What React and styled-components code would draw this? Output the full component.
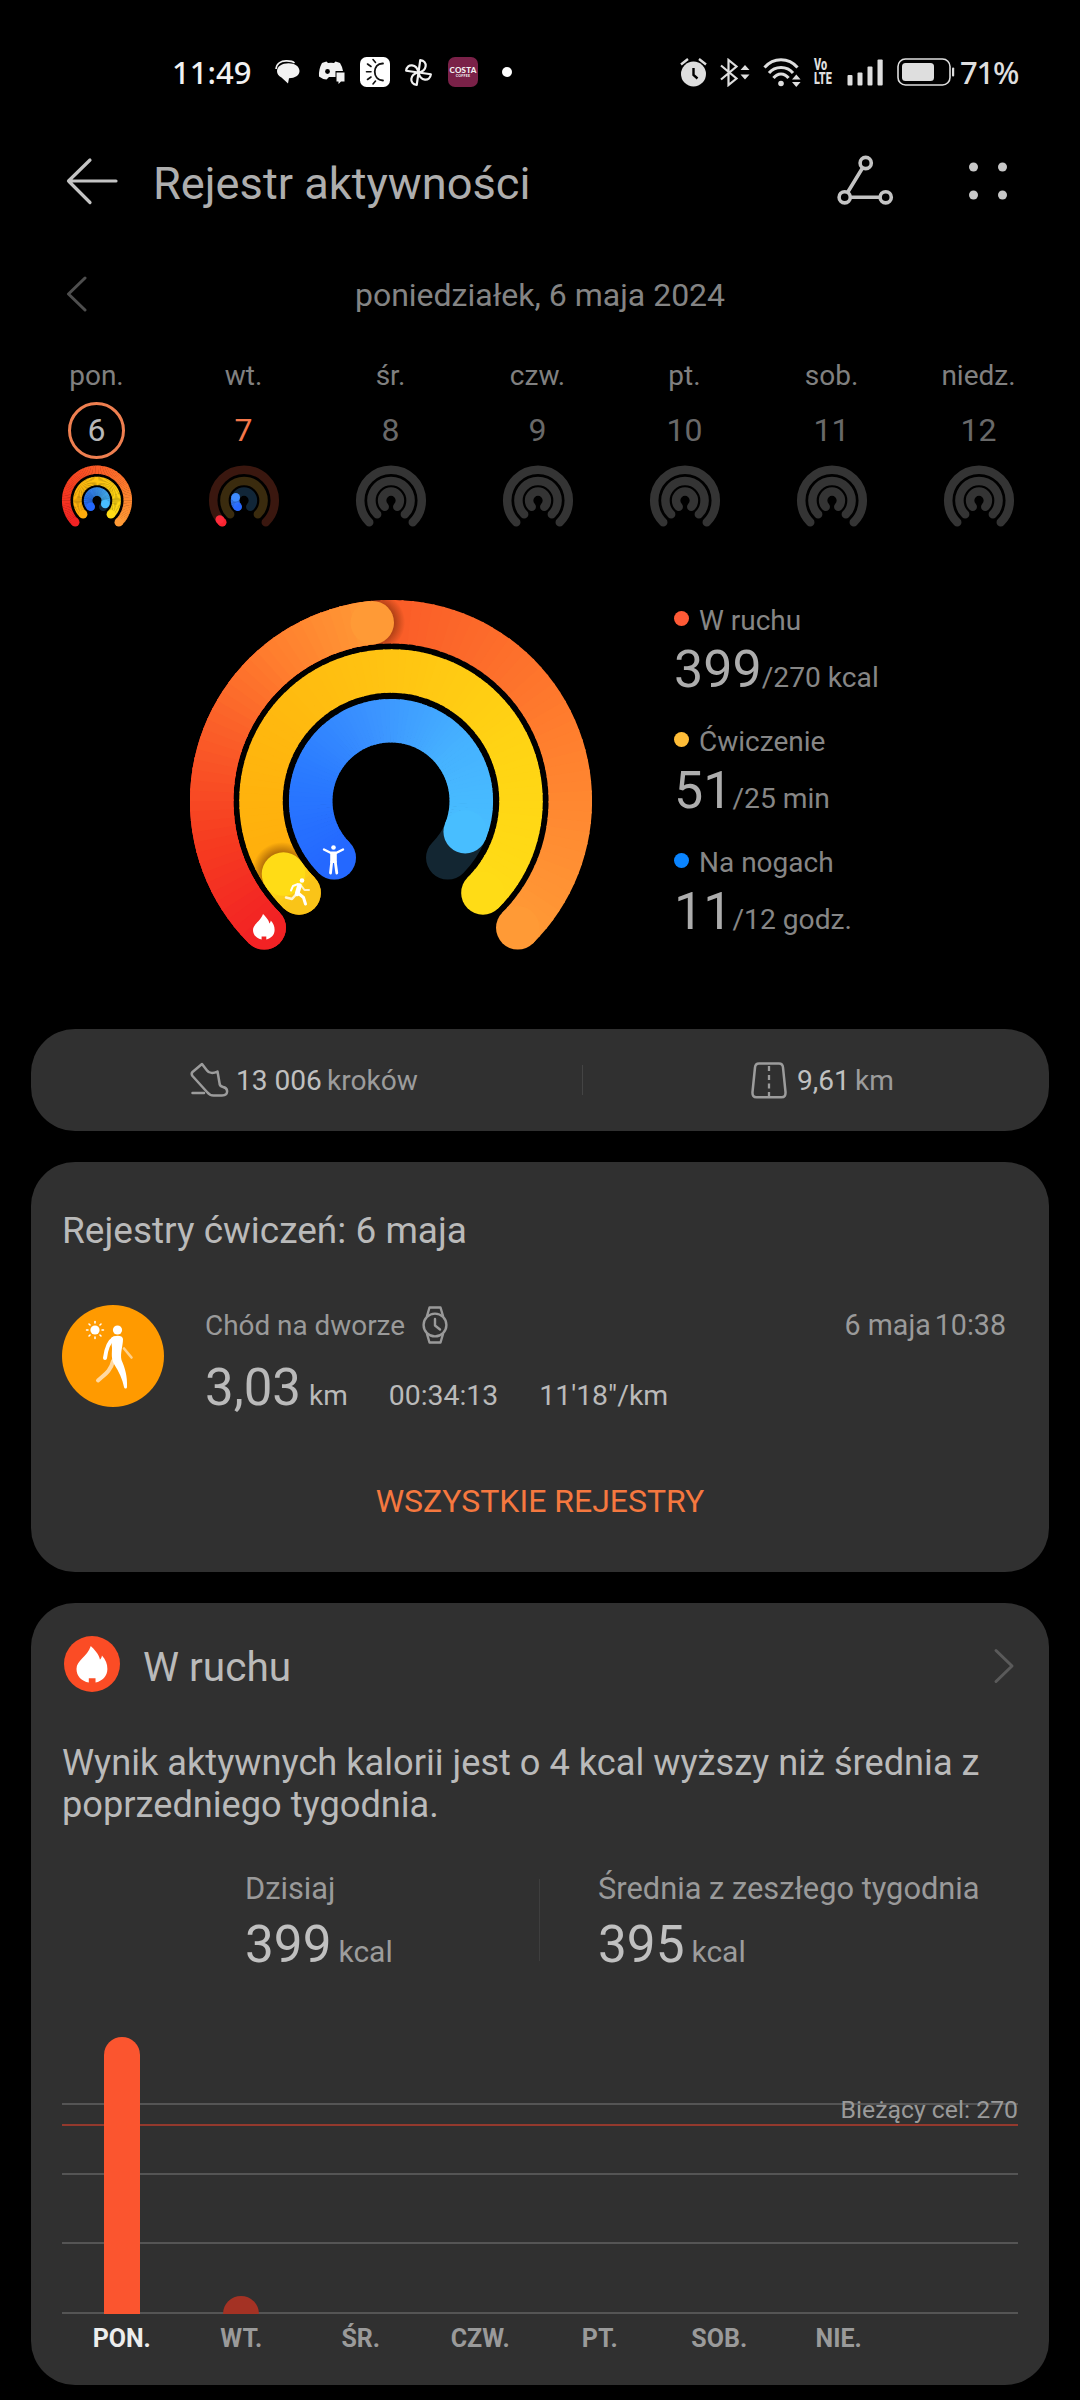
import styled, { createGlobalStyle } from 'styled-components'

const GlobalStyle = createGlobalStyle`
  * {
    box-sizing: border-box;
  }
  body {
    margin: 0;
    background: #000;
    font-family: Roboto, sans-serif;
  }
`

const days = [
  { name: 'pon.', date: 6, state: 'selected' },
  { name: 'wt.', date: 7, state: 'today' },
  { name: 'śr.', date: 8 },
  { name: 'czw.', date: 9 },
  { name: 'pt.', date: 10 },
  { name: 'sob.', date: 11 },
  { name: 'niedz.', date: 12 },
]

const goals = [
  { label: 'W ruchu', value: '399', target: '/270 kcal', color: '#ff5a36' },
  { label: 'Ćwiczenie', value: '51', target: '/25 min', color: '#ffbd38' },
  { label: 'Na nogach', value: '11', target: '/12 godz.', color: '#0a84ff' },
]

const bars = [
  { label: 'PON.', height: 277, color: '#fb552f', active: true },
  { label: 'WT.', height: 18, color: '#a43224' },
  { label: 'ŚR.' },
  { label: 'CZW.' },
  { label: 'PT.' },
  { label: 'SOB.' },
  { label: 'NIE.' },
]

const RED = [[242, 34, 36], [246, 60, 32], [250, 92, 40], [255, 126, 46], [255, 154, 54]]
const YELLOW = [[255, 172, 12], [255, 182, 14], [255, 196, 18], [255, 212, 20], [255, 220, 22]]
const YELLOW_LAP = [[250, 196, 24], [255, 220, 22]]
const BLUE = [[36, 104, 255], [42, 122, 255], [60, 148, 255], [70, 178, 255], [72, 190, 255]]

function mix(stops, t) {
  const pos = Math.min(Math.max(t, 0), 1) * (stops.length - 1)
  const i = Math.min(Math.floor(pos), stops.length - 2)
  const f = pos - i
  return `rgb(${stops[i].map((c, k) => Math.round(c + (stops[i + 1][k] - c) * f)).join(',')})`
}

// the gauges open at the bottom, so 0deg is the lower left end
function point(r, deg) {
  const a = ((135 + deg) * Math.PI) / 180
  return [r * Math.cos(a), r * Math.sin(a)]
}

function arcPath(r, from, to) {
  const [x1, y1] = point(r, from)
  const [x2, y2] = point(r, to)
  return `M${x1} ${y1}A${r} ${r} 0 ${to - from > 180 ? 1 : 0} 1 ${x2} ${y2}`
}

function Arc({ r, width, sweep, stops }) {
  const count = Math.max(2, Math.round(sweep / 3))
  const step = sweep / count
  const [sx, sy] = point(r, 0)
  const [ex, ey] = point(r, sweep)
  return (
    <g fill="none" strokeWidth={width}>
      <circle cx={sx} cy={sy} r={width / 2} fill={mix(stops, 0)} />
      {Array.from({ length: count }, (_, i) => (
        <path
          key={i}
          d={arcPath(r, i * step, Math.min((i + 1) * step + 0.6, sweep))}
          stroke={mix(stops, (i + 0.5) / count)}
        />
      ))}
      <circle cx={ex} cy={ey} r={width / 2} fill={mix(stops, 1)} />
    </g>
  )
}

function Track({ r, width, color }) {
  return <path d={arcPath(r, 0, 270)} fill="none" stroke={color} strokeWidth={width} strokeLinecap="round" />
}

function LapShadow({ id, r, width, deg }) {
  const [x, y] = point(r, deg)
  const o = r + width / 2
  const n = r - width / 2
  return (
    <g>
      <radialGradient id={`${id}-fade`}>
        <stop offset="0.6" stopColor="#5a2000" stopOpacity="0.5" />
        <stop offset="1" stopColor="#5a2000" stopOpacity="0" />
      </radialGradient>
      <clipPath id={id}>
        <path
          clipRule="evenodd"
          d={`M${-o} 0A${o} ${o} 0 1 1 ${o} 0A${o} ${o} 0 1 1 ${-o} 0ZM${-n} 0A${n} ${n} 0 1 1 ${n} 0A${n} ${n} 0 1 1 ${-n} 0Z`}
        />
      </clipPath>
      <g clipPath={`url(#${id})`}>
        <circle cx={x} cy={y} r={width / 2 + 8} fill={`url(#${id}-fade)`} />
      </g>
    </g>
  )
}

const FLAME =
  'M10 0C12 2 16 6 16.400 9.500C17 9 17.600 8 17.800 6.600C20.500 9.500 21.600 12.500 21.600 16C21.600 21 18 24.500 13.300 25.500V22.500H8.600V25.500C3.500 24.500 0 21 0 16C0 10 7.500 7.500 10 0Z'

function ActivityRings() {
  const w = 43.5
  return (
    <svg width="402" height="350" viewBox="-201 -201 402 350">
      <Arc r={179.3} width={w} sweep={270} stops={RED} />
      <LapShadow id="move" r={179.3} width={w} deg={130} />
      <Arc r={179.3} width={w} sweep={129} stops={RED} />
      <Arc r={130} width={w} sweep={270} stops={YELLOW} />
      <LapShadow id="exercise" r={130} width={w} deg={12} />
      <Arc r={130} width={w} sweep={10.8} stops={YELLOW_LAP} />
      <Track r={80.3} width={w} color="#132632" />
      <Arc r={80.3} width={w} sweep={247.5} stops={BLUE} />
      <path d={FLAME} fill="#fff" transform="translate(-138 113)" />
      <g transform="translate(-57.500 44)" stroke="#fff" fill="none" strokeLinecap="round" strokeLinejoin="round">
        <circle cx="0" cy="2.500" r="2.300" fill="#fff" stroke="none" />
        <path d="M-9.500 4.500L-3 7.800H3L9.500 4.500" strokeWidth="2.400" />
        <path d="M-2.300 8H2.300V17H-2.300Z" fill="#fff" strokeWidth="2" />
        <path d="M-1.800 17L-3 28M1.800 17L3.300 28" strokeWidth="2.800" />
      </g>
      <g transform="translate(-93 91)" stroke="#fff" fill="none" strokeLinecap="round" strokeLinejoin="round">
        <circle cx="4" cy="-11.500" r="2.300" fill="#fff" stroke="none" />
        <path d="M1.500 -6.500L-1 2" strokeWidth="4.600" />
        <path d="M0 -8L-5 -6L-7 -1.500" strokeWidth="2" />
        <path d="M3.500 -6L6.500 -2H11" strokeWidth="2" opacity="0.750" />
        <path d="M0 1L5.500 5.500L7.500 12" strokeWidth="3" />
        <path d="M-2 2.500L-6 7L-12 5.500" strokeWidth="2.500" opacity="0.800" />
      </g>
    </svg>
  )
}

function DayRings({ state }) {
  const w = 8.5
  const idle = state ? null : '#343434'
  return (
    <svg width="72" height="62" viewBox="-36 -35.500 72 62">
      {state !== 'selected' && (
        <>
          <Track r={30.8} width={w} color={idle || '#3a170f'} />
          <Track r={19.6} width={w} color={idle || '#3a2b0e'} />
          <Track r={8.9} width={w} color={idle || '#112638'} />
        </>
      )}
      {state === 'selected' && (
        <>
          <Arc r={30.8} width={w} sweep={270} stops={RED} />
          <Arc r={19.6} width={w} sweep={270} stops={YELLOW} />
          <Track r={8.9} width={w} color="#112638" />
          <Arc r={8.9} width={w} sweep={247.5} stops={BLUE} />
        </>
      )}
      {state === 'today' && (
        <>
          <Arc r={30.8} width={w} sweep={7} stops={[[250, 36, 48], [255, 44, 60]]} />
          <Arc r={8.9} width={w} sweep={67} stops={[[40, 104, 255], [62, 140, 255]]} />
        </>
      )}
    </svg>
  )
}

function ChatIcon() {
  return (
    <svg width="25" height="24" viewBox="0 0 25 24" fill="#f2f2f2">
      <path d="M1 9C1.500 3.500 6 1 11 0.900C15 0.800 18 1.500 19.500 3" fill="none" stroke="#f2f2f2" strokeWidth="1.600" />
      <path d="M13.500 3.200C20 3.200 24.500 6.500 24.500 11C24.500 15.500 20 18 14 18.300L13 23.500L6.500 17.500C3.500 16 2 14 2 11C2 6.500 7 3.200 13.500 3.200Z" />
    </svg>
  )
}

function DiscordIcon() {
  return (
    <svg width="27" height="24" viewBox="0 0 27 24">
      <path
        fill="#f2f2f2"
        d="M8.500 1.500L10 3Q13 2.500 16 3L17.500 1.500Q20 2 22 3Q24.500 7 25 11H17.500V17H11L8.500 19.500Q4 19 1 16.500Q0.500 9 4 3Q6 2 8.500 1.500Z"
      />
      <circle cx="9.500" cy="11.500" r="2.400" fill="#000" />
      <path fill="#f2f2f2" d="M18.500 12.500H26.500V21.500H23L20.500 24V21.500H18.500Z" />
    </svg>
  )
}

function SunAppIcon() {
  return (
    <svg width="30" height="30" viewBox="0 0 30 30" fill="none" stroke="#111" strokeWidth="1.600" strokeLinecap="round">
      <rect width="30" height="30" rx="6.500" fill="#fff" stroke="none" />
      <path d="M23 6.500C12 6 12 23.500 23 23.500" strokeWidth="1.800" />
      <path d="M13 2.500L15.500 5.500M7.500 7L11 9.500M6.500 14.800H11M7.500 22.500L11 20M13 27L15.500 24" />
    </svg>
  )
}

function PinwheelIcon() {
  return (
    <svg width="29" height="29" viewBox="-14.500 -14.500 29 29" fill="none" stroke="#f2f2f2" strokeWidth="2.200" strokeLinejoin="round">
      {[8, 98, 188, 278].map((deg) => (
        <path key={deg} d="M0 0V-12.500C8 -12.500 8.500 -3 0 0Z" transform={`rotate(${deg})`} />
      ))}
    </svg>
  )
}

function AlarmIcon() {
  return (
    <svg width="27" height="29" viewBox="0 0 27 29" stroke="#dedede" strokeWidth="2.400" fill="none">
      <circle cx="13.500" cy="16" r="12.500" fill="#dedede" stroke="none" />
      <path d="M1 6.500L8 1M26 6.500L19 1" />
      <path d="M13.500 10V17L17.500 20.500" stroke="#000" />
    </svg>
  )
}

function BluetoothIcon() {
  return (
    <svg width="30" height="29" viewBox="0 0 30 29" stroke="#dedede" strokeWidth="2.200" fill="none">
      <path d="M1 7.500L16.500 20.500L8.500 27V2L16.500 8.500L1 21.500" />
      <path d="M20.500 12L25 7L29.500 12ZM20.500 16.500L25 21.500L29.500 16.500Z" fill="#dedede" stroke="none" />
    </svg>
  )
}

function WifiIcon() {
  return (
    <svg width="38" height="29" viewBox="0 0 38 29" stroke="#dedede" strokeWidth="3" fill="none">
      <path d="M1.500 9.500C10.500 -0.800 25.500 -0.800 34.500 9.500" />
      <path d="M6 15C12 7.500 24 7.500 30 15" />
      <path d="M10.500 20C14.500 14.500 21.500 14.500 25.500 20" />
      <circle cx="18" cy="25.500" r="2.800" fill="#dedede" stroke="none" />
      <path d="M29 21.500L33.300 16.500L37.600 21.500ZM29 24L33.300 29L37.600 24Z" fill="#dedede" stroke="none" />
    </svg>
  )
}

function SignalIcon() {
  return (
    <svg width="37" height="27" viewBox="0 0 37 27" fill="#dedede">
      <rect x="0.500" y="16" width="5" height="10.500" rx="1" />
      <rect x="10.500" y="13.500" width="5" height="13" rx="1" />
      <rect x="20.500" y="7.500" width="5" height="19" rx="1" />
      <rect x="30.500" y="0.500" width="5.200" height="26" rx="1" />
    </svg>
  )
}

function BatteryIcon() {
  return (
    <svg width="58" height="28" viewBox="0 0 58 28">
      <rect x="1" y="1" width="52" height="26" rx="7.500" fill="none" stroke="#dedede" strokeWidth="1.600" />
      <rect x="5" y="5" width="32" height="18" rx="3.500" fill="#dedede" />
      <rect x="55" y="9.500" width="2.200" height="9" rx="1" fill="#dedede" />
    </svg>
  )
}

function BackIcon() {
  return (
    <svg width="54" height="48" viewBox="0 0 54 48" fill="none" stroke="#c4c4c4" strokeWidth="3.200" strokeLinecap="round" strokeLinejoin="round">
      <path d="M25 3L3.500 24L25 45.500M3.500 24H51" />
    </svg>
  )
}

function RouteIcon() {
  return (
    <svg width="58" height="52" viewBox="0 0 58 52" fill="none" stroke="#c4c4c4" strokeWidth="3.600">
      <circle cx="28.700" cy="8" r="5.600" />
      <circle cx="7.700" cy="42.300" r="5.600" />
      <circle cx="48.700" cy="42.300" r="5.600" />
      <path d="M25.500 13L10.700 37.300M13.500 42.300H43" />
    </svg>
  )
}

function MenuIcon() {
  return (
    <svg width="38" height="38" viewBox="0 0 38 38" fill="#c8c8c8">
      <circle cx="4.500" cy="5" r="4.500" />
      <circle cx="33.500" cy="5" r="4.500" />
      <circle cx="4.500" cy="33" r="4.500" />
      <circle cx="33.500" cy="33" r="4.500" />
    </svg>
  )
}

function Chevron({ right }) {
  return (
    <svg
      width="22"
      height="36"
      viewBox="0 0 22 36"
      fill="none"
      stroke={right ? '#5a5a5a' : '#4e4e4e'}
      strokeWidth="3"
      strokeLinecap="round"
      strokeLinejoin="round"
    >
      <path d={right ? 'M3 2.500L19 18L3 33.500' : 'M19 2L2.500 18L19 34'} />
    </svg>
  )
}

function ShoeIcon() {
  return (
    <svg width="39" height="36" viewBox="0 0 39 36" fill="none" stroke="#9c9c9c" strokeWidth="2.500" strokeLinejoin="round" strokeLinecap="round">
      <path d="M12 2L2.500 10C1.500 11 1.500 12.500 2.500 14L17 30C19 32.500 21 33.500 23.500 33.500H32C36 33.500 37.500 31.500 37 28.500C36.700 26.500 35.500 25.500 33 25C30.500 24.500 29.500 23.500 29.500 21L27.500 9.500C23.500 11.500 19 11.500 17 8.500Z" />
      <path d="M2.500 31H14" />
    </svg>
  )
}

function RoadIcon() {
  return (
    <svg width="36" height="37" viewBox="0 0 36 37" fill="none" stroke="#9c9c9c" strokeWidth="2.500" strokeLinejoin="round">
      <path d="M8 1.500H28C30.500 1.500 31.800 3 32 5.500L34.500 30C34.700 33.500 33.500 35.300 30.500 35.300H5.500C2.500 35.300 1.300 33.500 1.500 30L4 5.500C4.200 3 5.500 1.500 8 1.500Z" />
      <path d="M18 4V9M18 13V18M18 21.500V26.500M18 30V34" strokeWidth="2.300" />
    </svg>
  )
}

function WatchIcon() {
  return (
    <svg width="26" height="38" viewBox="0 0 26 38" fill="none" stroke="#9a9a9a" strokeWidth="2.400" strokeLinejoin="round" strokeLinecap="round">
      <circle cx="13" cy="19" r="11.400" />
      <path d="M5 10L7.500 1.500H18.500L21 10M5 28L7.500 36.500H18.500L21 28M13 13V19.500L18 23.500" />
    </svg>
  )
}

function WalkIcon() {
  return (
    <svg width="102" height="102" viewBox="0 0 102 102" fill="none" strokeLinecap="round" strokeLinejoin="round">
      <circle cx="51" cy="51" r="51" fill="#ff9a00" />
      <circle cx="33" cy="25" r="4.600" fill="#fff" />
      {[0, 45, 90, 135, 180, 225, 270, 315].map((deg) => (
        <path key={deg} d="M33 18V16.500" stroke="#fff" strokeWidth="1.500" transform={`rotate(${deg} 33 25)`} />
      ))}
      <circle cx="55.500" cy="25" r="4.600" fill="#fff" />
      <path d="M62 43.500L69.500 52.500" stroke="#ffd08a" strokeWidth="2.600" />
      <path d="M51 56C49 66 42 70 36 75.500" stroke="#ffd9a3" strokeWidth="4" />
      <path d="M49 33C53 29.500 61 30 61 34C61 41 58 48 59.500 55C63 63 65.500 71 65 82C64.800 84 62.500 84 62 82C60.500 74 57 67 52 59C49 54 50 48 50 43Z" fill="#fff" />
      <path d="M52 33.500C46 37 44 45 43 53" stroke="#fff" strokeWidth="4" />
    </svg>
  )
}

function FlameBadge() {
  return (
    <svg width="56" height="56" viewBox="0 0 56 56">
      <circle cx="28" cy="28" r="28" fill="#fb4c25" />
      <path d={FLAME} fill="#fff" transform="translate(12.500 10) scale(1.430)" />
    </svg>
  )
}

export default function App() {
  return (
    <Screen>
      <GlobalStyle />
      <StatusBar>
        <Clock>11:49</Clock>
        <StatusIcons>
          <ChatIcon />
          <StatusSlot $left={18}><DiscordIcon /></StatusSlot>
          <StatusSlot $left={15}><SunAppIcon /></StatusSlot>
          <StatusSlot $left={14}><PinwheelIcon /></StatusSlot>
          <CostaBadge>
            COSTA
            <small>COFFEE</small>
          </CostaBadge>
          <MoreDot />
        </StatusIcons>
        <StatusIcons $end>
          <AlarmIcon />
          <BluetoothIcon />
          <WifiIcon />
          <VoLte>Vo<br />LTE</VoLte>
          <SignalIcon />
          <BatteryIcon />
        </StatusIcons>
        <BatteryLevel>71%</BatteryLevel>
      </StatusBar>

      <Header>
        <BackIcon />
        <Title>Rejestr aktywności</Title>
        <HeaderActions>
          <RouteIcon />
          <MenuIcon />
        </HeaderActions>
      </Header>

      <DateRow>
        <Chevron />
        <span>poniedziałek, 6 maja 2024</span>
      </DateRow>

      <Week>
        {days.map((day) => (
          <Day key={day.name}>
            <DayName>{day.name}</DayName>
            <DayDate $state={day.state}>{day.date}</DayDate>
            <DayRings state={day.state} />
          </Day>
        ))}
      </Week>

      <Summary>
        <ActivityRings />
        <Legend>
          {goals.map((goal) => (
            <div key={goal.label}>
              <GoalLabel $color={goal.color}>{goal.label}</GoalLabel>
              <GoalValue>
                {goal.value}
                <span>{goal.target}</span>
              </GoalValue>
            </div>
          ))}
        </Legend>
      </Summary>

      <StepsCard>
        <Steps>
          <ShoeIcon />
          <Metric><b>13 006</b>kroków</Metric>
        </Steps>
        <Distance>
          <RoadIcon />
          <Metric><b>9,61</b>km</Metric>
        </Distance>
      </StepsCard>

      <RecordsCard>
        <CardTitle>Rejestry ćwiczeń: 6 maja</CardTitle>
        <Workout>
          <WalkIcon />
          <WorkoutBody>
            <WorkoutHead>
              <span>Chód na dworze</span>
              <WatchIcon />
              <WorkoutDate>
                <span>6 maja</span>
                <span>10:38</span>
              </WorkoutDate>
            </WorkoutHead>
            <WorkoutStats>
              <WorkoutDistance>3,03<span>km</span></WorkoutDistance>
              <span>00:34:13</span>
              <span>11'18"/km</span>
            </WorkoutStats>
          </WorkoutBody>
        </Workout>
        <AllRecords>WSZYSTKIE REJESTRY</AllRecords>
      </RecordsCard>

      <MoveCard>
        <MoveHead>
          <FlameBadge />
          <h2>W ruchu</h2>
          <Chevron right />
        </MoveHead>
        <Insight>Wynik aktywnych kalorii jest o 4 kcal wyższy niż średnia z poprzedniego tygodnia.</Insight>
        <Compare>
          <CompareItem>
            <p>Dzisiaj</p>
            <CompareValue>399<span>kcal</span></CompareValue>
          </CompareItem>
          <CompareItem $divided>
            <p>Średnia z zeszłego tygodnia</p>
            <CompareValue>395<span>kcal</span></CompareValue>
          </CompareItem>
        </Compare>
        <Chart>
          <GridLines>
            <i />
            <i />
            <i />
            <i />
          </GridLines>
          <GoalLine>
            <span>Bieżący cel: 270</span>
          </GoalLine>
          <Bars>
            {bars.map((bar) => (
              <Bar key={bar.label} style={{ height: bar.height || 0, background: bar.color }} />
            ))}
          </Bars>
        </Chart>
        <BarLabels>
          {bars.map((bar) => (
            <BarLabel key={bar.label} $active={bar.active}>{bar.label}</BarLabel>
          ))}
        </BarLabels>
      </MoveCard>
    </Screen>
  )
}

const Screen = styled.div`
  width: 1080px;
  height: 2400px;
  overflow: hidden;
  background: #000;
  color: #bababa;
  svg {
    display: block;
    flex: none;
  }
`

const StatusBar = styled.div`
  display: flex;
  align-items: center;
  height: 104px;
  padding: 40px 61px 0 172px;
  color: #f2f2f2;
  font-family: 'Noto Sans', sans-serif;
  font-weight: 500;
`

const Clock = styled.div`
  width: 103px;
  font-size: 31px;
  line-height: 40px;
`

const StatusIcons = styled.div`
  display: flex;
  align-items: center;
  gap: ${(p) => (p.$end ? 13 : 0)}px;
  margin-left: ${(p) => (p.$end ? 'auto' : 0)};
`

const StatusSlot = styled.div`
  margin-left: ${(p) => p.$left}px;
`

const CostaBadge = styled.div`
  display: flex;
  flex-direction: column;
  justify-content: center;
  width: 30px;
  height: 30px;
  margin-left: 15px;
  border-radius: 7px;
  background: #7a2148;
  text-align: center;
  font: 900 8px/8px Lato, sans-serif;
  letter-spacing: 0.2px;
  small {
    font-size: 3.5px;
    line-height: 4px;
  }
`

const MoreDot = styled.div`
  width: 10px;
  height: 10px;
  margin-left: 24px;
  border-radius: 50%;
  background: #fff;
`

const VoLte = styled.div`
  width: 20px;
  height: 28px;
  color: #dedede;
  font: 900 16px/14px Roboto, sans-serif;
  transform: scaleX(0.68);
  transform-origin: left;
`

const BatteryLevel = styled.div`
  width: 59px;
  margin-left: 5px;
  color: #dedede;
  font-size: 31px;
  line-height: 40px;
  letter-spacing: -1.2px;
`

const Header = styled.header`
  display: flex;
  align-items: center;
  height: 158px;
  padding: 0 73px 0 65px;
  svg {
    margin-bottom: 4px;
  }
`

const Title = styled.h1`
  margin: 2px 0 0 34px;
  color: #aeaeae;
  font-size: 45.2px;
  font-weight: 400;
  line-height: 60px;
`

const HeaderActions = styled.div`
  display: flex;
  align-items: center;
  gap: 74px;
  margin-left: auto;
`

const DateRow = styled.div`
  display: grid;
  grid-template-columns: 22px 1fr 22px;
  align-items: center;
  height: 64px;
  padding: 0 66px;
  color: #848484;
  font-size: 32px;
  text-align: center;
  span {
    padding-top: 1px;
  }
`

const Week = styled.div`
  display: grid;
  grid-template-columns: repeat(7, 147px);
  justify-content: center;
  margin-top: 30px;
  padding-right: 5px;
`

const Day = styled.div`
  display: flex;
  flex-direction: column;
  align-items: center;
`

const DayName = styled.div`
  color: #808080;
  font-size: 28px;
  line-height: 40px;
`

const DayDate = styled.div`
  width: 57px;
  height: 57px;
  margin: 6px 0 6px;
  border: 3px solid ${(p) => (p.$state === 'selected' ? '#ef7f50' : 'transparent')};
  border-radius: 50%;
  color: ${(p) => ({ selected: '#b8b8b8', today: '#f4774a' })[p.$state] || '#696969'};
  font-size: 32px;
  line-height: 51px;
  text-align: center;
`

const Summary = styled.section`
  display: flex;
  gap: 82px;
  height: 502px;
  padding: 73px 0 0 190px;
`

const Legend = styled.div`
  display: flex;
  flex-direction: column;
  gap: 24px;
  padding-top: 3px;
`

const GoalLabel = styled.div`
  display: flex;
  align-items: center;
  gap: 10px;
  margin-bottom: 1px;
  color: #868686;
  font-size: 28px;
  line-height: 36px;
  &::before {
    content: '';
    width: 15px;
    height: 15px;
    margin-bottom: 5px;
    border-radius: 50%;
    background: ${(p) => p.$color};
  }
`

const GoalValue = styled.div`
  height: 60px;
  color: #adadad;
  font-size: 52px;
  line-height: 60px;
  white-space: nowrap;
  span {
    color: #868686;
    font-size: 28.2px;
  }
`

const Card = styled.section`
  width: 1018px;
  margin: 0 31px 31px;
  border-radius: 44px;
  background: #303030;
`

const StepsCard = styled(Card)`
  display: grid;
  grid-template-columns: 552px 1fr;
  align-items: center;
  height: 102px;
`

const Steps = styled.div`
  display: flex;
  align-items: center;
  gap: 7px;
  height: 30px;
  padding-left: 159px;
  border-right: 1px solid #444;
`

const Distance = styled.div`
  display: flex;
  align-items: center;
  gap: 10px;
  padding-left: 168px;
`

const Metric = styled.span`
  display: flex;
  gap: 5px;
  padding-top: 1px;
  color: #9c9c9c;
  font-size: 28.1px;
  b {
    color: #c0c0c0;
    font-weight: 400;
  }
`

const RecordsCard = styled(Card)`
  height: 410px;
  padding: 45px 31px 0;
`

const CardTitle = styled.h2`
  margin: 0;
  font-size: 37px;
  font-weight: 400;
  line-height: 48px;
`

const Workout = styled.div`
  display: flex;
  gap: 41px;
  margin-top: 50px;
`

const WorkoutBody = styled.div`
  flex: 1;
`

const WorkoutHead = styled.div`
  display: flex;
  align-items: center;
  height: 40px;
  padding-right: 12px;
  color: #9a9a9a;
  font-size: 27.9px;
  svg {
    margin-left: 17px;
  }
`

const WorkoutDate = styled.div`
  display: flex;
  gap: 4px;
  margin-left: auto;
  font-size: 28.6px;
`

const WorkoutStats = styled.div`
  display: flex;
  align-items: baseline;
  gap: 41px;
  margin-top: 13px;
  font-size: 28.4px;
  line-height: 60px;
`

const WorkoutDistance = styled.div`
  font-size: 51px;
  span {
    margin-left: 8px;
    font-size: 28px;
  }
`

const AllRecords = styled.div`
  margin-top: 51px;
  color: #f5783f;
  font-size: 32px;
  line-height: 48px;
  text-align: center;
`

const MoveCard = styled(Card)`
  height: 782px;
  padding: 33px 31px 0;
`

const MoveHead = styled.div`
  display: flex;
  align-items: center;
  height: 56px;
  padding: 0 3px 0 2px;
  h2 {
    margin: 5px auto 0 23px;
    font-size: 40.6px;
    font-weight: 400;
    line-height: 56px;
  }
  svg:last-child {
    margin-top: 3px;
  }
`

const Insight = styled.p`
  margin: 50px 0 0;
  font-size: 36.2px;
  line-height: 42px;
`

const Compare = styled.div`
  display: flex;
  margin-top: 53px;
`

const CompareItem = styled.div`
  width: ${(p) => (p.$divided ? 'auto' : '294px')};
  height: 82px;
  margin-left: ${(p) => (p.$divided ? 0 : '183px')};
  padding-left: ${(p) => (p.$divided ? '58px' : 0)};
  border-left: ${(p) => (p.$divided ? '1px solid #3e3e3e' : 0)};
  white-space: nowrap;
  p {
    margin: -10px 0 0;
    color: #9a9a9a;
    font-size: 30.8px;
    line-height: 40px;
  }
`

const CompareValue = styled.div`
  margin-top: 6px;
  color: #c0c0c0;
  font-size: 51.3px;
  line-height: 60px;
  span {
    margin-left: 7px;
    color: #9c9c9c;
    font-size: 30px;
  }
`

const Chart = styled.div`
  position: relative;
  height: 278px;
  margin-top: 75px;
`

const GridLines = styled.div`
  display: flex;
  flex-direction: column;
  justify-content: space-between;
  height: 278px;
  padding-top: 67px;
  i {
    height: 2px;
    background: #555;
  }
`

const GoalLine = styled.div`
  position: absolute;
  left: 0;
  right: 0;
  top: 88px;
  height: 2px;
  background: #93392d;
  span {
    position: absolute;
    right: 0;
    bottom: 2px;
    color: #9a9a9a;
    font-size: 24.8px;
    line-height: 28px;
  }
`

const Bars = styled.div`
  position: absolute;
  inset: 0;
  display: grid;
  grid-template-columns: repeat(8, 1fr);
  align-items: end;
  justify-items: center;
`

const Bar = styled.div`
  width: 36px;
  border-radius: 18px 18px 0 0;
`

const BarLabels = styled.div`
  display: grid;
  grid-template-columns: repeat(8, 1fr);
  margin-top: 8px;
  text-align: center;
`

const BarLabel = styled.span`
  color: ${(p) => (p.$active ? '#ededed' : '#9a9a9a')};
  font-size: 25px;
  font-weight: 700;
  line-height: 34px;
`
